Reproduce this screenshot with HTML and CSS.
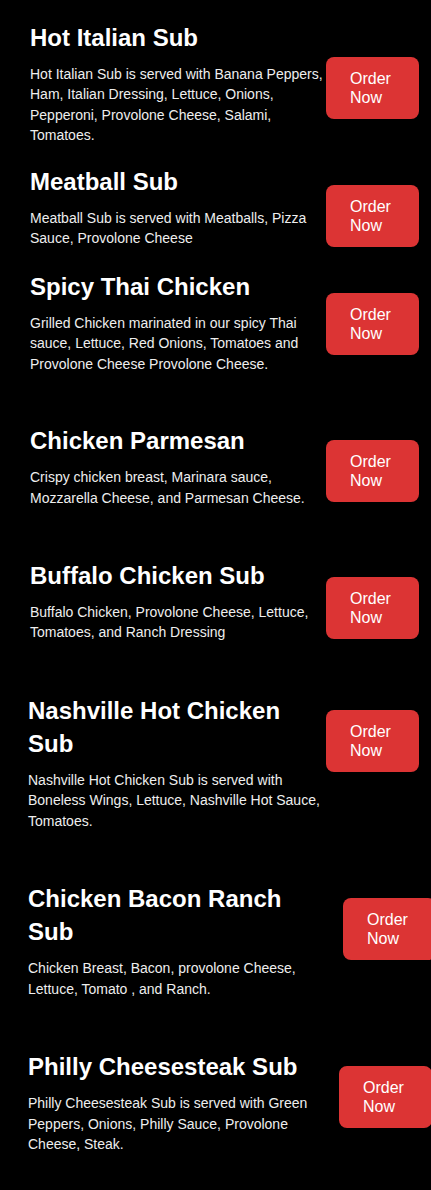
FILE: index.html
```html
<!DOCTYPE html>
<html lang="en">
<head>
  <meta charset="UTF-8">
  <meta name="viewport" content="width=device-width, initial-scale=1.0">
  <title>Subs Menu</title>
  <link rel="stylesheet" href="styles.css">
</head>
<body>
  <div class="menu">

    <!-- Classic subs -->
    <div class="menu-group tight">
      <div class="item">
        <div class="info">
          <h2>Hot Italian Sub</h2>
          <p>Hot Italian Sub is served with Banana Peppers, Ham, Italian Dressing, Lettuce, Onions, Pepperoni, Provolone Cheese, Salami, Tomatoes.</p>
        </div>
        <button class="order-btn drop-lg">Order Now</button>
      </div>
      <div class="item">
        <div class="info">
          <h2>Meatball Sub</h2>
          <p>Meatball Sub is served with Meatballs, Pizza Sauce, Provolone Cheese</p>
        </div>
        <button class="order-btn drop-md">Order Now</button>
      </div>
      <div class="item spaced">
        <div class="info">
          <h2>Spicy Thai Chicken</h2>
          <p>Grilled Chicken marinated in our spicy Thai sauce, Lettuce, Red Onions, Tomatoes and Provolone Cheese Provolone Cheese.</p>
        </div>
        <button class="order-btn drop-md2">Order Now</button>
      </div>
    </div>

    <!-- Chicken subs -->
    <div class="menu-group loose">
      <div class="item">
        <div class="info">
          <h2>Chicken Parmesan</h2>
          <p>Crispy chicken breast, Marinara sauce, Mozzarella Cheese, and Parmesan Cheese.</p>
        </div>
        <button class="order-btn">Order Now</button>
      </div>
      <div class="item">
        <div class="info">
          <h2>Buffalo Chicken Sub</h2>
          <p>Buffalo Chicken, Provolone Cheese, Lettuce, Tomatoes, and Ranch Dressing</p>
        </div>
        <button class="order-btn drop-sm">Order Now</button>
      </div>
      <div class="item shifted">
        <div class="info">
          <h2>Nashville Hot Chicken Sub</h2>
          <p>Nashville Hot Chicken Sub is served with Boneless Wings, Lettuce, Nashville Hot Sauce, Tomatoes.</p>
        </div>
        <button class="order-btn">Order Now</button>
      </div>
      <div class="item shifted">
        <div class="info">
          <h2>Chicken Bacon Ranch Sub</h2>
          <p>Chicken Breast, Bacon, provolone Cheese, Lettuce, Tomato , and Ranch.</p>
        </div>
        <button class="order-btn push-far">Order Now</button>
      </div>
      <div class="item shifted">
        <div class="info">
          <h2>Philly Cheesesteak Sub</h2>
          <p>Philly Cheesesteak Sub is served with Green Peppers, Onions, Philly Sauce, Provolone Cheese, Steak.</p>
        </div>
        <button class="order-btn push-mid">Order Now</button>
      </div>
    </div>

  </div>
</body>
</html>
```

FILE: styles.css
```css
body {
  font-family: "Liberation Sans", Arial, sans-serif;
  background-color: #000;
  color: #fff;
  margin: 0;
  padding: 0;
}
.menu {
  padding: 21px 0 34px;
  display: flex;
  flex-direction: column;
  gap: 50px;
}
.menu-group {
  display: flex;
  flex-direction: column;
}
.menu-group.tight {
  gap: 19px;
}
.menu-group.loose {
  gap: 51px;
}
.item {
  display: flex;
  align-items: flex-start;
  padding-left: 30px;
}
.item.spaced {
  margin-top: 2px;
}
.item.shifted {
  padding-left: 28px;
}
.info {
  width: 296px;
  flex-shrink: 0;
}
.info h2 {
  margin: 0 0 10px;
  font-size: 24px;
  line-height: 33px;
  font-weight: bold;
  color: #fff;
}
.info p {
  margin: 0;
  font-size: 14px;
  line-height: 20.45px;
  color: #eee;
}
.order-btn {
  flex-shrink: 0;
  box-sizing: border-box;
  width: 93px;
  height: 62px;
  margin-top: 16px;
  padding: 0 20px 0 24px;
  background-color: #dc3434;
  color: #fff;
  border: none;
  border-radius: 8px;
  font-family: "Liberation Sans", Arial, sans-serif;
  font-size: 16px;
  line-height: 19px;
  text-align: left;
  cursor: pointer;
}
.order-btn:hover {
  background-color: #b82828;
}
.order-btn.drop-lg {
  margin-top: 36px;
}
.order-btn.drop-md {
  margin-top: 20px;
}
.order-btn.drop-md2 {
  margin-top: 23px;
}
.order-btn.drop-sm {
  margin-top: 18px;
}
.item.shifted .order-btn {
  margin-left: 2px;
}
.item.shifted .order-btn.push-far {
  margin-left: 19px;
}
.item.shifted .order-btn.push-mid {
  margin-left: 15px;
}
```
